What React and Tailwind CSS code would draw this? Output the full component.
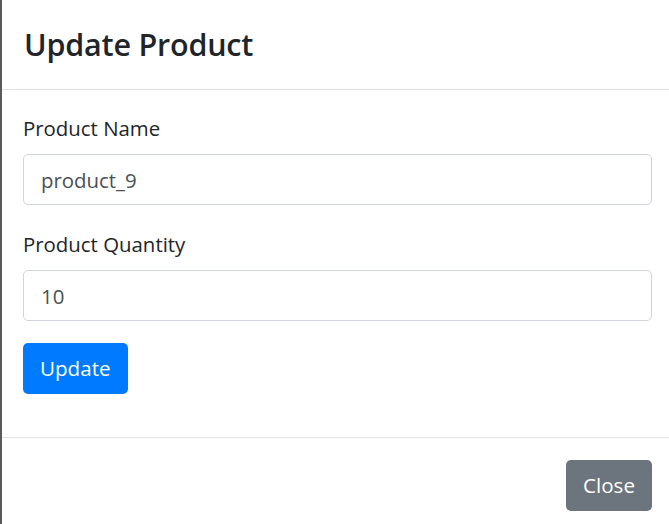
import React from 'react';

export default function App() {
  const font = { fontFamily: '"Open Sans", "Noto Sans", sans-serif' };

  return (
    <div
      className="flex h-[524px] w-[669px] flex-col overflow-hidden border-l-2 border-[#5a5a5a] bg-white text-[#212529]"
      style={font}
    >
      <div className="flex h-[90px] shrink-0 items-center border-b border-[#dee2e6] px-[22px]">
        <h5 className="text-[30.5px] font-semibold leading-none tracking-[-0.2px]">Update Product</h5>
      </div>

      <div className="flex h-[347px] shrink-0 flex-col pl-[21px] pr-[17px] pt-[22px]">
        <label className="h-[32px] text-[20.4px] leading-[32px]">Product Name</label>
        <input
          defaultValue="product_9"
          className="mt-[10px] h-[51px] w-full rounded-[5px] border border-[#ced4da] px-[17px] text-[20.4px] text-[#495057] outline-none"
        />

        <label className="mt-[23px] h-[32px] text-[20.4px] leading-[32px]">Product Quantity</label>
        <input
          defaultValue="10"
          className="mt-[10px] h-[51px] w-full rounded-[5px] border border-[#ced4da] px-[17px] text-[20.4px] text-[#495057] outline-none"
        />

        <div className="mt-[22px]">
          <button className="h-[51px] rounded-[5px] bg-[#007bff] px-[17px] text-[20.6px] text-white">
            Update
          </button>
        </div>
      </div>

      <div className="flex flex-1 items-start justify-end border-t border-[#dee2e6] pr-[17px] pt-[22px]">
        <button className="h-[51px] rounded-[5px] bg-[#6c757d] px-[17px] text-[20.6px] text-white">
          Close
        </button>
      </div>
    </div>
  );
}
